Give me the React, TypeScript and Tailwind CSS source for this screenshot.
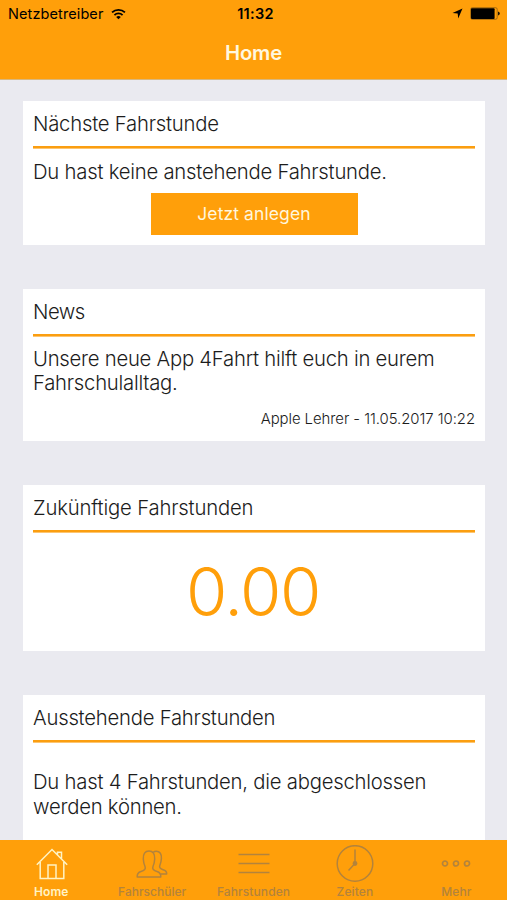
import type { ReactNode } from "react";

function Card({ title, titleClass, className, children }: { title: string; titleClass: string; className: string; children: ReactNode }) {
  return (
    <section className={`mx-[23px] w-[462px] shrink-0 bg-white px-2.5 ${className}`}>
      <h2 className={`box-content h-[45px] whitespace-nowrap border-b-[2.5px] border-[#fb9e10] leading-[46px] ${titleClass}`}>{title}</h2>
      <div className="h-[0.5px] bg-[#fb9e10]/60" />
      {children}
    </section>
  );
}

function Tab({ label, active, className, children }: { label: string; active?: boolean; className: string; children: ReactNode }) {
  return (
    <button className={`flex flex-1 flex-col items-center ${active ? "text-[#fff3c4]" : "text-[#b3833c]"}`}>
      <span className="flex h-[44px] items-center justify-center pt-px">{children}</span>
      <span className={`whitespace-nowrap text-[12px] leading-[14px] ${className}`}>{label}</span>
    </button>
  );
}

export default function App() {
  return (
    <div className="flex h-[900px] w-[507px] flex-col overflow-hidden bg-[#eaeaf0] font-['Inter',sans-serif] text-[20.3px] font-[340] tracking-[-0.23px] text-[#1c1c1c]">
      <header className="h-[80px] shrink-0 border-b border-[#d9b77c] bg-[#ff9f0a] tracking-normal">
        <div className="grid h-[27px] grid-cols-3 items-center text-black">
          <div className="flex items-center pl-2">
            <span className="text-[14.5px] font-normal tracking-[0.1px]">Netzbetreiber</span>
            <svg className="ml-2 h-[12px] w-[15px]" viewBox="0 0 16 13" fill="none" stroke="currentColor" strokeWidth="1.9">
              <path d="M1 4.8a10 10 0 0 1 14 0M3.6 7.6a6.2 6.2 0 0 1 8.8 0" />
              <path d="M5.5 9.8a3.6 3.6 0 0 1 5 0L8 12.3Z" fill="currentColor" stroke="none" />
            </svg>
          </div>
          <span className="pl-1 text-center text-[14.5px] font-semibold tracking-[0.3px]">11:32</span>
          <div className="flex items-center justify-end pr-[7px]">
            <svg className="mr-[7px] h-[11px] w-[11px]" viewBox="0 0 11 11" fill="currentColor"><path d="M10.5.5 6.2 10.5 5.7 5.4.5 5Z" /></svg>
            <svg className="h-[13px] w-[30px]" viewBox="0 0 30 13">
              <rect x=".7" y=".7" width="26.5" height="11.6" rx="1.6" fill="none" stroke="#8d5d12" strokeWidth=".8" />
              <rect x="1" y="1.2" width="23.6" height="10.8" rx="1" fill="#000" />
              <path d="M28 4.5q1.8.5 1.8 2T28 8.5Z" fill="#201606" />
            </svg>
          </div>
        </div>
        <h1 className="text-center text-[20.3px] font-semibold leading-[51px] tracking-[-0.15px] text-[#fff8e0]">Home</h1>
      </header>

      <main className="flex min-h-0 flex-1 flex-col gap-[44px] overflow-hidden pt-[21px]">
        <Card title="Nächste Fahrstunde" titleClass="" className="h-[144px]">
          <p className="whitespace-nowrap pt-[10px] leading-[25px]">Du hast keine anstehende Fahrstunde.</p>
          <button className="mx-auto mt-[9.5px] block h-[42px] w-[207px] bg-[#ff9f0a] text-[17.5px] font-normal tracking-[0.1px] text-[#fff6dc]">Jetzt anlegen</button>
        </Card>
        <Card title="News" titleClass="tracking-[-0.5px]" className="h-[152px]">
          <p className="whitespace-nowrap pt-[10px] leading-[24.5px] tracking-[-0.25px]">Unsere neue App 4Fahrt hilft euch in eurem<br />Fahrschulalltag.</p>
          <p className="mt-[13px] text-right text-[14.9px] leading-[20px] tracking-[-0.05px]">Apple Lehrer - 11.05.2017 10:22</p>
        </Card>
        <Card title="Zukünftige Fahrstunden" titleClass="tracking-[-0.18px]" className="h-[166px]">
          <p className="pr-[2px] text-center text-[67px] font-[270] leading-[118px] tracking-[-1.4px] text-[#ff9f0a]">0.00</p>
        </Card>
        <Card title="Ausstehende Fahrstunden" titleClass="" className="h-[166px]">
          <p className="whitespace-nowrap pt-[27.5px] leading-[24.5px]">Du hast 4 Fahrstunden, die abgeschlossen<br />werden können.</p>
        </Card>
      </main>

      <nav className="flex h-[60px] shrink-0 bg-[#ff9f0a] pt-px tracking-normal">
        <Tab label="Home" active className="ml-px font-semibold tracking-[0.1px]">
          <svg className="ml-[2px] h-[32px] w-[32px]" viewBox="0 0 32 32" fill="none" stroke="currentColor" strokeWidth="1.5">
            <path d="M.8 16.8 16 1.5l15.2 15.3M4.2 14v16.5h23.6V14M12 30.5V17h8v13.5M21.5 6.5V4.2h4v7" />
          </svg>
        </Tab>
        <Tab label="Fahrschüler" className="font-medium">
          <svg className="h-[28px] w-[32px]" viewBox="0 0 32 28" fill="none" stroke="currentColor" strokeWidth="1.5" strokeLinejoin="round">
            <path d="M1.2 27C1 23.500 2 22.300 5 21.500c3.500-1 5-2.800 4-5C7.800 14 7.500 12.500 7.300 9 7 4 9 1 13 1s6 3 5.700 8c-.2 3.500-.5 5-1.700 7.500-1 2.200.5 4 4 5 3 .8 4 2 3.800 5.500Z" />
            <path d="M17.200 2.300C18.200 1.500 19 1.300 20.200 1.300c3.800 0 5.500 2.700 5.200 7.200-.2 3-.5 4.500-1.500 6.700-.9 2 .2 3.600 3.200 4.500 2.800.8 3.700 1.800 3.600 4.300h-6" />
          </svg>
        </Tab>
        <Tab label="Fahrstunden" className="font-medium tracking-[0.1px]">
          <svg className="h-[22px] w-[32px]" viewBox="0 0 32 22" stroke="currentColor" strokeWidth="1.5"><path d="M.5 1.500h31M.5 10.500h31M.5 19.500h31" /></svg>
        </Tab>
        <Tab label="Zeiten" className="font-medium tracking-[0.1px]">
          <svg className="h-[38px] w-[38px]" viewBox="0 0 38 38" fill="none" stroke="currentColor" strokeWidth="1.5">
            <circle cx="19" cy="18.5" r="17.8" /><path d="M19 4.5v14l-6.5 7" /><circle cx="19" cy="18.5" r="1.7" fill="currentColor" />
          </svg>
        </Tab>
        <Tab label="Mehr" className="font-medium tracking-[0.1px]">
          <svg className="-ml-px h-[8px] w-[30px]" viewBox="0 0 30 8" fill="none" stroke="currentColor" strokeWidth="1.7"><circle cx="4" cy="3.500" r="2.500" /><circle cx="15" cy="3.500" r="2.500" /><circle cx="26" cy="3.500" r="2.500" /></svg>
        </Tab>
      </nav>
    </div>
  );
}
